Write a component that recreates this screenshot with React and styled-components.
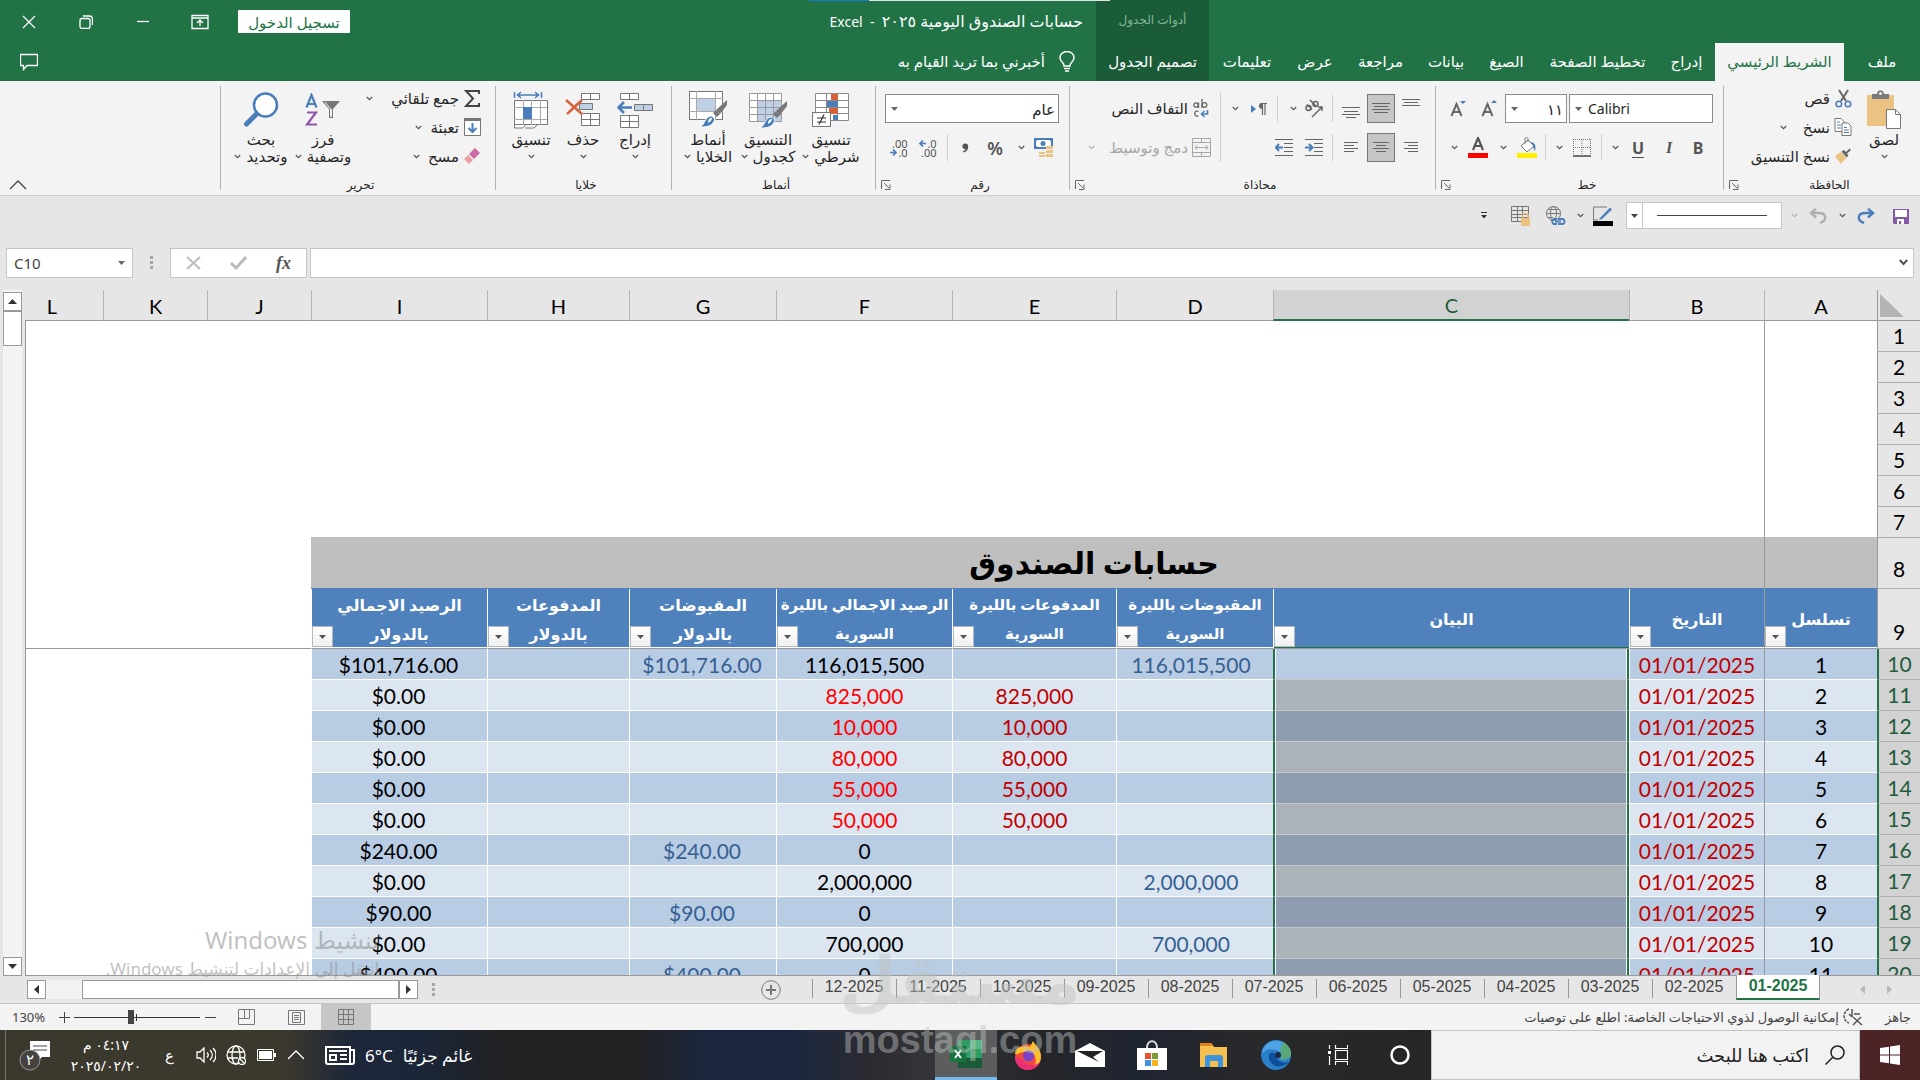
import React from "react";
import styled, { createGlobalStyle, css } from "styled-components";

const UI = `"Noto Sans", "DejaVu Sans", sans-serif`;
const CELL = `Lato, "DejaVu Sans", sans-serif`;

const Global = createGlobalStyle`
  *, *::before, *::after { box-sizing: border-box; }
  body { margin: 0; background: #e6e6e6; overflow: hidden; }
  button, input, select { font: inherit; color: inherit; margin: 0; padding: 0; border: 0; background: none; border-radius: 0; }
  button { cursor: pointer; }
  svg { display: block; flex: none; }
`;

/* ---------- shell ---------- */
const Shell = styled.div`
  position: relative;
  display: flex;
  flex-direction: column;
  height: 100vh;
  font-family: ${UI};
  font-size: 13px;
  color: #262626;
  white-space: nowrap;
`;

/* ---------- header ---------- */
const Header = styled.header`
  display: flex;
  height: 81px;
  background: #217346;
  color: #fff;
`;
const TabStrip = styled.nav`
  display: flex;
  align-items: flex-end;
`;
const Tab = styled.button`
  width: ${(p) => p.$w}px;
  height: 38px;
  padding-bottom: 2px;
  font-size: 15px;
  color: ${(p) => (p.$active ? "#217346" : "#fff")};
  background: ${(p) => (p.$active ? "#f3f3f3" : "none")};
`;
const ContextGroup = styled.div`
  display: flex;
  flex-direction: column;
  align-items: center;
  background: #1b5c38;
`;
const ContextCaption = styled.span`
  height: 43px;
  line-height: 40px;
  font-size: 12px;
  color: #86b79a;
`;
const HeaderRest = styled.div`
  flex: 1;
  display: flex;
  flex-direction: column;
`;
const HeaderLine = styled.div`
  display: flex;
  align-items: center;
  height: ${(p) => p.$h}px;
  padding-right: ${(p) => p.$pr}px;
`;
const DocTitle = styled.h1`
  margin: 0;
  font-size: 16px;
  font-weight: 400;
  line-height: 20px;
  white-space: pre;
  span { font-size: 14px; }
`;
const Spacer = styled.div`
  flex: 1;
`;
const SignIn = styled.button`
  width: 112px;
  height: 23px;
  background: #fff;
  color: #217346;
  font-size: 15px;
  line-height: 20px;
  border-radius: 1px;
  margin-left: 10px;
`;
const WindowButton = styled.button`
  width: 57px;
  height: 38px;
  display: grid;
  place-items: center;
`;
const TellMe = styled.button`
  display: flex;
  align-items: center;
  gap: 14px;
  padding-bottom: 2px;
  font-size: 15px;
  color: #fff;
`;
const EdgeStrip = styled.div`
  position: absolute;
  top: 0;
  right: 810px;
  width: 301px;
  height: 1px;
  background: linear-gradient(to right, #1979ca 60px, #e2e2e2 60px);
`;

/* ---------- ribbon ---------- */
const Ribbon = styled.section`
  display: flex;
  height: 115px;
  background: #f3f3f3;
  border-bottom: 1px solid #d0d0d0;
`;
const Group = styled.div`
  width: ${(p) => p.$w}px;
  display: flex;
  flex-direction: column;
  background: linear-gradient(#b3b3b3, #b3b3b3) left 5px / 1px 104px no-repeat;
`;
const GroupBody = styled.div`
  display: flex;
  flex: 1;
  padding-right: ${(p) => p.$pr || 10}px;
`;
const GroupFoot = styled.div`
  display: flex;
  align-items: center;
  height: 20px;
  padding-left: 6px;
`;
const GroupName = styled.span`
  flex: 1;
  text-align: center;
  font-size: 12px;
  line-height: 16px;
`;
const Launcher = styled.button`
  width: 10px;
  height: 10px;
`;
const Stack = styled.div`
  display: flex;
  flex-direction: column;
  padding-top: 13px;
  gap: 10px;
`;
const Line = styled.div`
  display: flex;
  align-items: center;
  height: 29px;
  gap: ${(p) => p.$gap || 0}px;
`;
const Tool = styled.button`
  display: grid;
  place-items: center;
  width: ${(p) => p.$w}px;
  height: 29px;
  color: #444;
  ${(p) =>
    p.$on &&
    css`
      background: #c6c6c6;
      border: 1px solid #777;
    `}
`;
const Glyph = styled.span`
  font-size: ${(p) => p.$size || 16}px;
  line-height: 20px;
  font-weight: ${(p) => (p.$bold ? 700 : 400)};
  font-style: ${(p) => (p.$italic ? "italic" : "normal")};
  font-family: ${(p) => (p.$italic ? '"Liberation Serif", serif' : UI)};
  text-decoration: ${(p) => (p.$underline ? "underline" : "none")};
  text-underline-offset: 3px;
  color: #555;
`;
const Rule = styled.span`
  width: ${(p) => p.$w}px;
  height: 27px;
  background: linear-gradient(#d0d0d0, #d0d0d0) center / 1px 100% no-repeat;
`;
const TallRule = styled.span`
  width: 1px;
  height: 69px;
  margin-top: 12px;
  background: #d0d0d0;
`;
const Combo = styled.label`
  display: flex;
  align-items: center;
  direction: ltr;
  width: ${(p) => p.$w}px;
  height: 29px;
  padding: 0 ${(p) => (p.$rtl ? 1 : 4)}px 0 5px;
  background: #fff;
  border: 1px solid #8c8c8c;
  select {
    flex: 1;
    min-width: 0;
    height: 100%;
    padding: 0 2px 0 6px;
    appearance: none;
    outline: 0;
    font-family: ${UI};
    font-size: ${(p) => (p.$rtl ? 15 : 14)}px;
    direction: ${(p) => (p.$rtl ? "rtl" : "ltr")};
  }
`;
const SmallColumn = styled.div`
  display: flex;
  flex-direction: column;
  width: ${(p) => p.$w}px;
  padding-top: 3px;
`;
const SmallButton = styled.button`
  display: flex;
  align-items: center;
  height: 29px;
  padding-bottom: 1px;
  font-size: 15px;
  color: ${(p) => (p.$off ? "#a6a6a6" : "#262626")};
`;
const SmallIcon = styled.span`
  width: 26px;
  display: grid;
  place-items: center;
`;
const ChevGap = styled.span`
  margin-right: ${(p) => p.$gap || 14}px;
`;
const LargeButton = styled.button`
  width: ${(p) => p.$w}px;
  padding-top: 8px;
  display: flex;
  flex-direction: column;
  align-items: center;
  font-size: 15px;
  line-height: 17px;
`;
const LargeIcon = styled.span`
  height: 42px;
  display: grid;
  place-items: center;
`;
const LargeLine = styled.span`
  display: flex;
  align-items: center;
  height: 17px;
  gap: 5px;
`;
const Collapse = styled.button`
  align-self: flex-end;
  margin-right: auto;
  margin-left: 9px;
  padding-bottom: 5px;
`;

/* ---------- quick access bar ---------- */
const Quick = styled.div`
  display: flex;
  align-items: center;
  height: 39px;
  padding-right: 4px;
`;
const LineStyle = styled.button`
  display: flex;
  align-items: stretch;
  direction: ltr;
  width: 156px;
  height: 27px;
  margin: 0 8px 0 6px;
  background: #fff;
  border: 1px solid #c6c6c6;
`;
const LineCaret = styled.span`
  display: grid;
  place-items: center;
  width: 16px;
  border-right: 1px solid #c6c6c6;
`;
const LineSample = styled.span`
  flex: 1;
  align-self: center;
  height: 1px;
  margin: 0 14px;
  background: #444;
`;

/* ---------- formula bar ---------- */
const FormulaBar = styled.div`
  display: flex;
  direction: ltr;
  align-items: center;
  height: 55px;
  padding: 0 6px;
`;
const Boxed = styled.div`
  display: flex;
  align-items: center;
  height: 30px;
  background: #fff;
  border: 1px solid #c6c6c6;
  ${(p) => (p.$w ? `width: ${p.$w}px;` : "flex: 1;")}
  padding: 0 ${(p) => p.$px || 0}px;
  justify-content: ${(p) => (p.$spread ? "space-between" : "flex-start")};
  input {
    flex: 1;
    min-width: 0;
    outline: 0;
    font-family: ${UI};
    font-size: 15px;
    color: #444;
  }
`;
const Dots = styled.span`
  width: ${(p) => p.$w}px;
  display: grid;
  align-content: center;
  justify-items: center;
  gap: 2px;
  i {
    width: 3px;
    height: 3px;
    background: #a6a6a6;
  }
`;
const Gap = styled.span`
  width: ${(p) => p.$w}px;
`;

/* ---------- sheet ---------- */
const SheetArea = styled.main`
  display: flex;
  flex: 1;
  min-height: 0;
`;
const SheetClip = styled.div`
  position: relative;
  flex: 1;
  min-width: 0;
  overflow: hidden;
  border-bottom: 1px solid #999;
`;
const PaneLine = styled.span`
  position: absolute;
  top: 31px;
  bottom: 0;
  ${(p) => (p.$edge ? "left: 0;" : "right: 155px;")}
  width: 1px;
  background: #999;
`;
const Table = styled.table`
  width: calc(100% + 25px);
  table-layout: fixed;
  border-collapse: separate;
  border-spacing: 0;
  font-family: ${CELL};
  font-size: 21px;
  line-height: 28px;
  color: #000;
  td,
  th {
    padding: 0;
    text-align: center;
    font-weight: 400;
  }
`;
const ColHead = styled.th`
  height: 31px;
  font-size: 20px;
  && { padding-top: 1px; }
  background: ${(p) => (p.$sel ? "#d2d2d2" : "#e6e6e6")};
  color: ${(p) => (p.$sel ? "#1f5c3d" : "#000")};
  border-left: 1px solid #b4b4b4;
  border-bottom: ${(p) => (p.$sel ? "2px solid #217346" : "1px solid #999")};
`;
const Corner = styled.th`
  background: #e6e6e6;
  border-bottom: 1px solid #999;
  border-left: 1px solid #999;
  svg { margin-right: auto; margin-left: 2px; }
`;
const RowHead = styled.th`
  height: ${(p) => p.$h || 31}px;
  vertical-align: bottom;
  && { padding-bottom: ${(p) => p.$pb || 1}px; }
  background: ${(p) => (p.$sel ? "#d2d2d2" : "#e6e6e6")};
  color: ${(p) => (p.$sel ? "#1f5c3d" : "#000")};
  border-bottom: 1px solid #b0b0b0;
  border-left: ${(p) => (p.$sel ? "2px solid #217346" : "1px solid #999")};
`;
const Blank = styled.td`
  background: #fff;
  border-bottom: ${(p) => (p.$frozen ? "1px solid #999" : "0")};
`;
const Banner = styled.td`
  background: #bfbfbf;
  && { font-weight: 700; padding-bottom: 3px; }
  font-size: 30px;
  line-height: 44px;
  box-shadow: 0 -1px #bfbfbf;
`;
const Field = styled.th`
  position: relative;
  background: #4f81bd;
  color: #fff;
  && { font-weight: 700; }
  font-size: ${(p) => (p.$tight ? 15 : 16)}px;
  line-height: 29px;
  border-left: 1px solid #fff;
  border-bottom: 1px solid #999;
  box-shadow: inset 0 -1px ${(p) => (p.$sel ? "#217346" : "#fff")}, 0 -1px #4f81bd;
`;
const Filter = styled.button`
  position: absolute;
  left: 0;
  bottom: 1px;
  width: 21px;
  height: 21px;
  display: grid;
  place-items: center;
  background: linear-gradient(#fff, #f0f0f0);
  border: 1px solid #b2b8c0;
`;
const Cell = styled.td`
  background: ${(p) => (p.$odd ? "#b8cce4" : "#dce6f1")};
  color: ${(p) => p.$ink || "#000"};
  border-left: 1px solid #fff;
  border-bottom: 1px solid #fff;
  && {
    padding-top: 2px;
    padding-right: ${(p) => p.$pad || 0}px;
  }
`;
const PickedCell = styled(Cell)`
  background: ${(p) => (p.$first ? "#b8cce4" : p.$odd ? "#8e9cb0" : "#abb2b9")};
  border-left: 2px solid #217346;
  border-right: 2px solid #217346;
  border-bottom-color: #c3c7cb;
  box-shadow: inset 1px 0 #fff, inset -1px 0 #fff;
`;
const VScroll = styled.div`
  display: flex;
  flex-direction: column;
  width: 25px;
  padding: 2px 3px 0;
  background: linear-gradient(#f3f3f3, #f3f3f3) 3px 0 / 19px 100% no-repeat;
`;
const ScrollEnd = styled.button`
  display: grid;
  place-items: center;
  width: 19px;
  height: 19px;
  background: #fff;
  border: 1px solid #999;
`;
const VThumb = styled.div`
  width: 19px;
  height: 35px;
  background: #fff;
  border: 1px solid #999;
  margin-bottom: auto;
`;

/* ---------- sheet tabs ---------- */
const SheetTabs = styled.div`
  display: flex;
  height: 28px;
  padding: 0 16px 0 27px;
  border-bottom: 1px solid #c6c6c6;
`;
const Arrows = styled.div`
  display: flex;
  align-items: center;
  justify-content: center;
  gap: 22px;
  width: 84px;
  padding-left: 28px;
`;
const SheetTab = styled.button`
  width: 84px;
  height: 23px;
  font-family: "Liberation Sans", Arial, sans-serif;
  font-size: 16px;
  line-height: 20px;
  padding-bottom: 2px;
  color: #444;
  background: linear-gradient(#999, #999) left 3px / 1px 19px no-repeat;
  ${(p) =>
    p.$active &&
    css`
      height: 25px;
      margin-top: -1px;
      position: relative;
      background: #fff;
      color: #217346;
      font-weight: 700;
      border: 1px solid #999;
      border-width: 0 1px;
      border-bottom: 2px solid #217346;
    `}
`;
const AddSheet = styled.button`
  margin-right: 31px;
  display: grid;
  place-items: center;
`;
const HScroll = styled.div`
  display: flex;
  direction: ltr;
  align-self: center;
  width: 391px;
  background: #f3f3f3;
`;
const HThumb = styled.div`
  flex: 1;
  margin-left: 36px;
  height: 19px;
  background: #fff;
  border: 1px solid #999;
`;

/* ---------- status bar ---------- */
const Status = styled.footer`
  display: flex;
  align-items: center;
  height: 26px;
  padding: 0 9px 0 12px;
  background: #f3f3f3;
  font-size: 13px;
  color: #444;
`;
const Access = styled.button`
  display: flex;
  align-items: center;
  gap: 4px;
  margin-right: 22px;
`;
const View = styled.button`
  width: 50px;
  height: 26px;
  display: grid;
  place-items: center;
  background: ${(p) => (p.$on ? "#c6c6c6" : "none")};
`;
const ZoomGroup = styled.div`
  display: flex;
  align-items: center;
  margin-right: 5px;
`;
const Zoom = styled.input`
  width: 126px;
  height: 18px;
  margin: 0 4px;
  appearance: none;
  background: linear-gradient(#333, #333) 62px center / 1px 7px no-repeat,
    linear-gradient(#333, #333) center / 100% 1px no-repeat;
  &::-webkit-slider-thumb {
    appearance: none;
    width: 6px;
    height: 14px;
    background: #444;
  }
`;
const ZoomStep = styled.button`
  width: 12px;
  display: grid;
  place-items: center;
`;
const Percent = styled.span`
  width: 38px;
  direction: ltr;
  text-align: left;
  font-size: 13px;
  margin-right: 8px;
`;

/* ---------- taskbar ---------- */
const Taskbar = styled.div`
  display: flex;
  height: 50px;
  color: #fff;
  background: linear-gradient(to right, #3b382e 0, #3b382e 285px, #1d2739 350px, #1b2638 420px, #202123 500px, #202123 640px, #1b2740 710px, #1b2740 790px, #2b2a31 870px, #353539 935px, #25262a 1040px, #1f2531 1140px, #29282b 1250px, #262628 1430px);
`;
const Start = styled.button`
  width: 60px;
  display: grid;
  place-items: center;
  background: #4d2426;
`;
const Search = styled.label`
  display: flex;
  align-items: center;
  gap: 16px;
  width: 429px;
  padding-right: 14px;
  background: #f2f2f2;
  border: 1px solid #c4c4c4;
  color: #222;
  input {
    flex: 1;
    min-width: 0;
    outline: 0;
    font-size: 18px;
    font-family: ${UI};
  }
  input::placeholder { color: #222; opacity: 1; }
`;
const Apps = styled.div`
  display: flex;
`;
const AppButton = styled.button`
  width: 62px;
  display: grid;
  place-items: center;
  ${(p) =>
    p.$on &&
    css`
      background: #5b5e5d;
      border-bottom: 3px solid #76b9ed;
    `}
`;
const Tray = styled.div`
  display: flex;
  align-items: center;
  margin-right: auto;
`;
const Weather = styled.button`
  display: flex;
  align-items: center;
  gap: 10px;
  font-size: 17px;
  color: #fff;
  margin-left: 14px;
`;
const TrayButton = styled.button`
  width: ${(p) => p.$w || 30}px;
  display: grid;
  place-items: center;
  color: #fff;
  font-size: 15px;
`;
const Clock = styled.button`
  width: 84px;
  display: flex;
  flex-direction: column;
  align-items: center;
  font-size: 14px;
  line-height: 21px;
  color: #fff;
`;
const Peek = styled.span`
  width: 6px;
  align-self: stretch;
  border-right: 1px solid #77756e;
`;

/* ---------- overlays ---------- */
const Activate = styled.div`
  position: absolute;
  left: 97px;
  bottom: 95px;
  width: 290px;
  padding-right: 8px;
  color: rgba(140, 140, 140, 0.55);
  font-size: 17px;
  line-height: 32px;
  pointer-events: none;
  strong {
    display: block;
    font-weight: 400;
    font-size: 24px;
    line-height: 26px;
  }
`;
const Brand = styled.div`
  position: absolute;
  left: 50%;
  bottom: 18px;
  transform: translateX(-50%);
  display: flex;
  flex-direction: column;
  align-items: center;
  color: rgba(190, 196, 192, 0.45);
  font: 700 38px / 44px "Liberation Sans", Arial, sans-serif;
  direction: ltr;
  pointer-events: none;
  b {
    font: 700 66px / 72px "DejaVu Sans", sans-serif;
  }
`;

/* ---------- drawings ---------- */
const Chev = ({ c = "#555" }) => (
  <svg width="7" height="5" viewBox="0 0 7 5" fill="none" stroke={c} strokeWidth="1.2"><path d="M.8 1l2.7 2.7L6.2 1" /></svg>
);
const Caret = ({ c = "#666" }) => (
  <svg width="7" height="4" viewBox="0 0 7 4"><path d="M0 0h7L3.5 4z" fill={c} /></svg>
);
const Lines = ({ y = [0, 4, 8, 12], w, align = "c" }) => {
  const ws = w || [14, 10, 14, 10];
  return (
    <svg width="18" height="21" viewBox="0 0 18 21" stroke="#666" strokeWidth="1">
      {ws.map((n, i) => {
        const x = align === "c" ? (18 - n) / 2 : align === "r" ? 18 - n - 2 : 2;
        return <path key={i} d={`M${x} ${y[i] + 0.5}h${n}`} />;
      })}
    </svg>
  );
};
const LaunchIcon = () => (
  <svg width="10" height="10" viewBox="0 0 10 10" fill="none" stroke="#666"><path d="M.5 9V.5H9M3 3l5 5M9 4.500V9.500H4" /></svg>
);
const PasteIcon = () => (
  <svg width="36" height="40" viewBox="0 0 36 40">
    <rect x="1" y="5" width="27" height="31" rx="1" fill="#eac282" />
    <path d="M6 9V4h5c0-5 7-5 7 0h5v5z" fill="#7a7a7a" /><circle cx="14.500" cy="3.500" r="1.500" fill="#f3f3f3" />
    <path d="M20.500 19.500h9l5 5v14h-14z" fill="#fff" stroke="#777" /><path d="M29.500 19.500v5h5" fill="none" stroke="#777" />
  </svg>
);
const CutIcon = () => (
  <svg width="17" height="19" viewBox="0 0 17 19" fill="none">
    <path d="M4 1l7 11M13 1L6 12" stroke="#666" strokeWidth="2" />
    <circle cx="3.800" cy="15" r="2.800" stroke="#4a7ebb" strokeWidth="1.500" /><circle cx="13" cy="15" r="2.800" stroke="#4a7ebb" strokeWidth="1.500" />
  </svg>
);
const CopyIcon = () => (
  <svg width="18" height="18" viewBox="0 0 18 18" fill="#fff" stroke="#777">
    <path d="M1 .5h6l3 3v10H1z" /><path d="M8 5h6l3 3v9.500H8z" /><path d="M3 4h3M3 7h4M3 10h4M10 9.500h3M10 12h5M10 14.500h5" stroke="#4a7ebb" />
  </svg>
);
const BrushIcon = () => (
  <svg width="18" height="16" viewBox="0 0 18 16"><path d="M1 8l6-4 5 6-5 6z" fill="#eac282" /><path d="M7.500 3.500l5 6 2-2-1.500-2L17 2 15.500.5 12 4 10 2z" fill="#666" /></svg>
);
const GrowIcon = ({ down }) => (
  <svg width="18" height="20" viewBox="0 0 18 20">
    <path d="M1.500 17L6.500 5l5 12M3.500 13h6" fill="none" stroke="#666" strokeWidth="2" />
    <path d={down ? "M10 2h6l-3 3z" : "M10 4h6l-3-3z"} fill="#4a7ebb" />
  </svg>
);
const BordersIcon = () => (
  <svg width="18" height="18" viewBox="0 0 18 18" fill="none" stroke="#777"><path strokeDasharray="1 1" d="M.5 0v16M9 0v16M17.500 0v16M0 .5h18M0 8.500h18" /><path d="M0 17h18" stroke="#444" strokeWidth="1.500" /></svg>
);
const FillIcon = () => (
  <svg width="20" height="21" viewBox="0 0 20 21"><path d="M4 9l7-6 6 6-7 6z" fill="#fff" stroke="#777" /><path d="M8 7V2c0-2 3-2 3 0v3" fill="none" stroke="#777" /><path d="M14 5c5 1 5 5 4 9-1-2-2-3-2-5z" fill="#4a7ebb" /><rect y="16" width="20" height="5" fill="#ffef00" /></svg>
);
const FontColorIcon = () => (
  <svg width="20" height="21" viewBox="0 0 20 21"><path d="M5 13L10 1l5 12M7 9h6" fill="none" stroke="#555" strokeWidth="2.200" /><rect y="16" width="20" height="5" fill="#f00" /></svg>
);
const OrientIcon = () => (
  <svg width="20" height="20" viewBox="0 0 20 20" fill="none" stroke="#666" strokeWidth="1.500"><circle cx="4.500" cy="9" r="2.500" /><path d="M3 5.500l5 5M6 1l6.500 6.500" /><circle cx="11.500" cy="5" r="2.500" /><path d="M8 18L18 8M18 12V8h-4" /></svg>
);
const ParaIcon = () => (
  <svg width="16" height="14" viewBox="0 0 16 14"><path d="M0 3l5 4-5 4z" fill="#4a7ebb" /><path d="M11.500 13V1.500M14 13V1.500M9.500 1.500H16" stroke="#666" fill="none" strokeWidth="1.200" /><path d="M11.500 1c-5 0-5 6 0 6z" fill="#666" /></svg>
);
const IndentIcon = ({ flip }) => (
  <svg width="18" height="17" viewBox="0 0 18 17" fill="none"><path d="M0 .5h18M9 4.500h9M9 8.500h9M9 12.500h9M0 16.500h18" stroke="#666" /><path d={flip ? "M0 8.500h7M4 5l3.500 3.500L4 12" : "M8 8.500H1M4 5L.8 8.500 4 12"} stroke="#4a7ebb" strokeWidth="2" /></svg>
);
const WrapIcon = () => (
  <svg width="16" height="19" viewBox="0 0 16 19" fill="none" stroke="#666" strokeWidth="1.300"><circle cx="3" cy="6" r="2.200" /><path d="M5.500 3.500V9M9 0v9" /><circle cx="11.500" cy="6" r="2.300" /><path d="M5.500 12.500c-5-2-5 6 0 4.500" /><path d="M14.500 11v4H9M11.500 12L8.500 15l3 3" stroke="#4a7ebb" strokeWidth="1.600" /></svg>
);
const MergeIcon = () => (
  <svg width="19" height="19" viewBox="0 0 19 19" fill="none" stroke="#a6a6a6"><path d="M.5.5h18v18H.5zM.5 4.500h18M.5 14.500h18M9.500.5v4M9.500 14.500v4M3 9.500h13M5.500 7L3 9.500 5.500 12M13.500 7L16 9.500 13.500 12" /></svg>
);
const MoneyIcon = () => (
  <svg width="20" height="20" viewBox="0 0 20 20"><rect x="1" y="1" width="17" height="9" fill="#fff" stroke="#4a7ebb" strokeWidth="2" /><circle cx="9" cy="5.500" r="2.500" fill="#4a7ebb" /><path d="M1 1h4L1 4zM18 1h-4l4 3zM1 10h4L1 7z" fill="#4a7ebb" /><path d="M12 8h7v3h-7zM12 12h7v3h-7zM12 16h7v3h-7zM5 14h6v2H5zM5 17h6v2H5z" fill="#eac282" /></svg>
);
const CommaIcon = () => (
  <svg width="7" height="10" viewBox="0 0 7 10" fill="#555"><circle cx="3.300" cy="3.300" r="2.800" /><path d="M6 2.500c.6 3.500-1 6-4.300 7L1 8.300c2-.8 3-2 2.800-4z" /></svg>
);
const PercentTool = styled(Glyph)`
  font-weight: 600;
`;
const Decimal = styled.span`
  display: flex;
  flex-direction: column;
  direction: ltr;
  font-size: 11px;
  line-height: 9px;
  color: #555;
  i { font-style: normal; display: flex; align-items: center; justify-content: flex-end; gap: 1px; }
`;
const SmallArrow = ({ right }) => (
  <svg width="7" height="7" viewBox="0 0 7 7" fill="none" stroke="#4a7ebb" strokeWidth="1.700"><path d={right ? "M0 3.500h6M3 .5l3 3-3 3" : "M7 3.500H1M4 .5l-3 3 3 3"} /></svg>
);
const gridPath = (x, y, w, h, c, r) => {
  let d = "";
  for (let i = 0; i <= c; i++) d += `M${x + Math.round((w * i) / c)} ${y}v${h}`;
  for (let j = 0; j <= r; j++) d += `M${x} ${y + Math.round((h * j) / r)}h${w}`;
  return d;
};
const CondIcon = () => (
  <svg width="38" height="36" viewBox="0 0 38 36"><rect x="3.500" y="1.500" width="33" height="27" fill="#fff" /><path d={gridPath(3.5, 1.5, 33, 27, 3, 4)} stroke="#8a8a8a" fill="none" /><path d="M19 2h7v6h-7zM17 16h9v6h-9z" fill="#d9623b" /><path d="M15 9h11v6H15zM21 23h5v5h-5z" fill="#4a7ebb" /><rect x=".5" y="20.500" width="18" height="14" fill="#fff" stroke="#777" /><path d="M5 26h9M5 30h9M12 22.500l-5 10" stroke="#333" strokeWidth="1.200" /></svg>
);
const Paint = () => (
  <>
    <path d="M39 9l-11 10 4 4 7-9z" fill="#777" /><path d="M25 22l3-3 4 4-3 3z" fill="#777" />
    <path d="M11 36c6-1 5-9 11-11 4 0 6 4 3 7-3 4-8 4-14 4z" fill="#4a7ebb" stroke="#fff" /><path d="M20 32c0-3 1-5 4-5 0 2-2 4-4 5z" fill="#fff" />
  </>
);
const TableIcon = () => (
  <svg width="40" height="37" viewBox="0 0 40 37"><rect x="1.500" y="1.500" width="32" height="28" fill="#fff" /><path d="M10 9h24v21H10z" fill="#bdd0e6" /><path d={gridPath(1.5, 1.5, 32, 28, 4, 4)} stroke="#999" fill="none" /><Paint /></svg>
);
const StyleIcon = () => (
  <svg width="40" height="38" viewBox="0 0 40 38"><rect x="1.500" y=".5" width="33" height="28" fill="#fff" stroke="#777" /><path d="M8.500 0v29M27.500 0v29M1 7.500h34M1 20.500h34" stroke="#aaa" /><path d="M9 8h18v12H9z" fill="#bdd0e6" /><Paint /></svg>
);
const InsertIcon = () => (
  <svg width="36" height="36" viewBox="0 0 36 36" fill="#fff" stroke="#777"><path d="M3.500 1.500h18v6h-18zM12.500 1.500v6M3.500 23.500h18v12h-18zM12.500 23.500v12M3.500 29.500h18" /><path d="M17.500 12.500h18v6h-18zM26.500 12.500v6" fill="#bdd0e6" /><path d="M15 15.500H2M7 10l-5.500 5.500L7 21" fill="none" stroke="#4a7ebb" strokeWidth="2.500" /></svg>
);
const DeleteIcon = () => (
  <svg width="36" height="34" viewBox="0 0 36 34" fill="#fff" stroke="#777"><path d="M16.500.5h18v6h-18zM25.500.5v6M16.500 20.500h18v12h-18zM25.500 20.500v12M16.500 26.500h18" /><path d="M14.500 10.500h13v6h-13z" fill="#bdd0e6" /><path d="M1 7l16 14M17 7L2 21" fill="none" stroke="#d9623b" strokeWidth="2.500" /></svg>
);
const FormatIcon = () => (
  <svg width="36" height="38" viewBox="0 0 36 38" fill="none"><path d="M1.500 1v6M28.500 1v6M4 4h22M8 1L4.500 4 8 7M22 1l3.500 3L22 7" stroke="#4a7ebb" strokeWidth="1.500" /><path d="M1.500 9.500h33v24h-33z" fill="#fff" stroke="#777" /><path d="M10.500 9v25M18.500 9v25M27.500 9v25M1 16.500h33M1 28.500h33" stroke="#aaa" /><path d="M10 16h9v12h-9z" fill="#4a7ebb" /><path d="M1.500 34v3h8l3-3M12 37h9l3-3" stroke="#777" fill="#fff" /></svg>
);
const SumIcon = () => (
  <svg width="16" height="17" viewBox="0 0 16 17" fill="none" stroke="#444" strokeWidth="2"><path d="M15 4V1H2l7 7.500L2 16h13v-3" /></svg>
);
const FillDown = () => (
  <svg width="17" height="18" viewBox="0 0 17 18" fill="none"><path d="M.5.5h16v17H.5z" fill="#fff" stroke="#777" /><path d="M0 0h17v3H0z" fill="#777" /><path d="M8.500 5v9M4.500 10l4 4 4-4" stroke="#4a7ebb" strokeWidth="2" /></svg>
);
const EraseIcon = () => (
  <svg width="16" height="16" viewBox="0 0 16 16"><path d="M5 6l6-6 5 5-6 6z" fill="#cf6aa8" /><path d="M0 11l4-4 5 5-4 4z" fill="#e9a0a0" /></svg>
);
const SortIcon = () => (
  <svg width="36" height="34" viewBox="0 0 36 34" fill="none"><path d="M1.500 14.500L6.500 2l5 12.500M3.500 11h6" stroke="#4a7ebb" strokeWidth="2.200" /><path d="M2 19.500h9L2 31.500h10" stroke="#9058a8" strokeWidth="2.200" /><path d="M17 8h18l-7 8v9h-4v-9z" fill="#777" /><path d="M20 9l5.500 7v7.500h1V16" stroke="#f3f3f3" /></svg>
);
const FindIcon = () => (
  <svg width="36" height="36" viewBox="0 0 36 36" fill="none"><circle cx="22.500" cy="13" r="11.500" fill="#fff" stroke="#4a7ebb" strokeWidth="2.500" /><path d="M13.500 22L3.500 32" stroke="#4a7ebb" strokeWidth="5" strokeLinecap="round" /></svg>
);
const Redo = ({ c = "#4a7ebb", flip }) => (
  <svg width="18" height="16" viewBox="0 0 18 16" fill="none" stroke={c} strokeWidth="2.500"><g transform={flip ? "translate(18 0) scale(-1 1)" : undefined}><path d="M7 15C-1 12 1 5 8 5h7" /><path d="M11 .8L16 5l-5 4.500" /></g></svg>
);
const SaveIcon = () => (
  <svg width="16" height="16" viewBox="0 0 16 16"><path d="M0 1h16v15H1L0 15z" fill="#8558a8" /><path d="M2 2h12v7H2zM4 11h7v5H4z" fill="#fff" /><path d="M6 13h2v3H6z" fill="#8558a8" /></svg>
);
const PenIcon = () => (
  <svg width="20" height="20" viewBox="0 0 20 20" fill="none"><path d="M14 1H.5v13H5" stroke="#777" /><path d="M7 12L17 1.500l2 2L9 13l-3 1z" fill="#4a7ebb" /><path d="M0 15h20v5H0z" fill="#000" /></svg>
);
const LinkIcon = () => (
  <svg width="20" height="20" viewBox="0 0 20 20" fill="none"><circle cx="7.500" cy="7.500" r="7" stroke="#777" /><ellipse cx="7.500" cy="7.500" rx="3" ry="7" stroke="#777" /><path d="M.5 7.500h14M2 3.500h11M2 11.500h5" stroke="#777" /><path d="M11 13H7.500a3 3 0 000 5H11M12 13h4a2.500 2.500 0 010 5h-4M9 15.500h6" stroke="#4a7ebb" strokeWidth="1.800" /></svg>
);
const LockIcon = () => (
  <svg width="20" height="20" viewBox="0 0 20 20" fill="none"><path d={gridPath(0.5, 0.5, 17, 15, 3, 4)} stroke="#777" /><path d="M10 12h9v8h-9z" fill="#eac282" /><path d="M12 12V9c0-2 5-2 5 0v3" stroke="#eac282" strokeWidth="1.500" /></svg>
);
const Tri = ({ d, c = "#333" }) => {
  const p = { up: "M0 5h9L4.500 0z", down: "M0 0h9L4.500 5z", left: "M5 0v9L0 4.500z", right: "M0 0v9l5-4.500z" }[d];
  const tall = d === "left" || d === "right";
  return <svg width={tall ? 5 : 9} height={tall ? 9 : 5}><path d={p} fill={c} /></svg>;
};
const W = ({ children, s = 16 }) => (
  <svg width={s} height={s} viewBox={`0 0 ${s} ${s}`} fill="none" stroke="#fff" strokeWidth="1.300">{children}</svg>
);

/* ---------- data ---------- */
const tabs = [["ملف", 76], ["الشريط الرئيسي", 129], ["إدراج", 57], ["تخطيط الصفحة", 121], ["الصيغ", 61], ["بيانات", 60], ["مراجعة", 71], ["عرض", 60], ["تعليمات", 76]];
const cols = [["A", 113], ["B", 135], ["C", 356], ["D", 157], ["E", 164], ["F", 176], ["G", 147], ["H", 142], ["I", 176], ["J", 104], ["K", 104], ["L", null]];
const fields = [
  ["تسلسل"],
  ["التاريخ"],
  ["البيان"],
  ["المقبوضات بالليرة", "السورية"],
  ["المدفوعات بالليرة", "السورية"],
  ["الرصيد الاجمالي بالليرة", "السورية"],
  ["المقبوضات", "بالدولار"],
  ["المدفوعات", "بالدولار"],
  ["الرصيد الاجمالي", "بالدولار"],
];
const BLUE = "#366092", DARK = "#c00000", RED = "#ff0000";
const rows = [
  ["116,015,500", "", "116,015,500", "$101,716.00", "$101,716.00"],
  ["", "825,000", "825,000", "", "$0.00"],
  ["", "10,000", "10,000", "", "$0.00"],
  ["", "80,000", "80,000", "", "$0.00"],
  ["", "55,000", "55,000", "", "$0.00"],
  ["", "50,000", "50,000", "", "$0.00"],
  ["", "", "0", "$240.00", "$240.00"],
  ["2,000,000", "", "2,000,000", "", "$0.00"],
  ["", "", "0", "$90.00", "$90.00"],
  ["700,000", "", "700,000", "", "$0.00"],
  ["", "", "0", "$400.00", "$400.00"],
];
const months = ["01", "02", "03", "04", "05", "06", "07", "08", "09", "10", "11", "12"];

const Foot = ({ name, launch }) => (
  <GroupFoot>
    <GroupName>{name}</GroupName>
    {launch && <Launcher aria-label={name}><LaunchIcon /></Launcher>}
  </GroupFoot>
);
const Small = ({ icon, label, chev, gap, off }) => (
  <SmallButton $off={off}>
    <SmallIcon>{icon}</SmallIcon>
    {label}
    {chev && <ChevGap $gap={gap}><Chev c={off ? "#b5b5b5" : undefined} /></ChevGap>}
  </SmallButton>
);
const Large = ({ w, icon, top, bottom }) => (
  <LargeButton $w={w}>
    <LargeIcon>{icon}</LargeIcon>
    <LargeLine>{top}</LargeLine>
    <LargeLine>{bottom}<Chev /></LargeLine>
  </LargeButton>
);
const ChevTool = ({ w, c }) => <Tool $w={w}><Chev c={c} /></Tool>;

function Blanks({ frozen }) {
  return <><Blank $frozen={frozen} /><Blank $frozen={frozen} /><Blank $frozen={frozen} /></>;
}

export default function App() {
  return (
    <Shell dir="rtl" lang="ar">
      <Global />
      <Header>
        <TabStrip>
          {tabs.map(([t, w], i) => <Tab key={t} $w={w} $active={i === 1}>{t}</Tab>)}
        </TabStrip>
        <ContextGroup>
          <ContextCaption>أدوات الجدول</ContextCaption>
          <Tab $w={113}>تصميم الجدول</Tab>
        </ContextGroup>
        <HeaderRest>
          <HeaderLine $h={43} $pr={13}>
            <DocTitle>حسابات الصندوق اليومية ٢٠٢٥<span>{"  -  Excel"}</span></DocTitle>
            <Spacer />
            <SignIn>تسجيل الدخول</SignIn>
            <WindowButton aria-label="خيارات عرض الشريط"><W s={18}><path d="M1 2.500h16v13H1zM1 5h16M9 13V7.500M6 10l3-3 3 3" /></W></WindowButton>
            <WindowButton aria-label="تصغير"><W s={14}><path d="M1 6.500h12" /></W></WindowButton>
            <WindowButton aria-label="استعادة"><W s={14}><rect x="1" y="3.500" width="10" height="10" rx="2" /><path d="M4 1h6.500a3 3 0 013 3v6" /></W></WindowButton>
            <WindowButton aria-label="إغلاق"><W s={14}><path d="M1 1l12 12M13 1L1 13" /></W></WindowButton>
          </HeaderLine>
          <HeaderLine $h={38} $pr={21}>
            <TellMe>
              <svg width="16" height="21" viewBox="0 0 16 21" fill="none" stroke="#fff" strokeWidth="1.500"><path d="M5 15c0-4-4-4-4-8.500a7 6 0 0114 0C15 11 11 11 11 15zM5 17.500h6M6 20h4" /></svg>
              أخبرني بما تريد القيام به
            </TellMe>
            <Spacer />
            <WindowButton aria-label="تعليقات"><W s={18}><path d="M.5 1.500h17v11H7l-3.500 4v-4h-3z" /></W></WindowButton>
          </HeaderLine>
        </HeaderRest>
      </Header>

      <Ribbon>
        <Group $w={197}>
          <GroupBody $pr={8}>
            <Large w={56} icon={<PasteIcon />} top="لصق" />
            <SmallColumn $w={124}>
              <Small icon={<CutIcon />} label="قص" />
              <Small icon={<CopyIcon />} label="نسخ" chev gap={16} />
              <Small icon={<BrushIcon />} label="نسخ التنسيق" />
            </SmallColumn>
          </GroupBody>
          <Foot name="الحافظة" launch />
        </Group>
        <Group $w={288}>
          <GroupBody>
            <Stack>
              <Line>
                <Combo $w={144}><Caret /><select aria-label="الخط"><option>Calibri</option></select></Combo>
                <Gap $w={2} />
                <Combo $w={62} $rtl><Caret /><select aria-label="حجم الخط"><option>١١</option></select></Combo>
                <Tool $w={30} aria-label="تكبير الخط"><GrowIcon /></Tool>
                <Tool $w={32} aria-label="تصغير الخط"><GrowIcon down /></Tool>
              </Line>
              <Line>
                <Tool $w={30}><Glyph $bold>B</Glyph></Tool>
                <Tool $w={28}><Glyph $bold $italic>I</Glyph></Tool>
                <Tool $w={34}><Glyph $bold $underline>U</Glyph></Tool>
                <ChevTool w={12} />
                <Rule $w={16} />
                <Tool $w={22}><BordersIcon /></Tool>
                <ChevTool w={24} />
                <Rule $w={4} />
                <Tool $w={32}><FillIcon /></Tool>
                <ChevTool w={16} />
                <Tool $w={34}><FontColorIcon /></Tool>
                <ChevTool w={14} />
              </Line>
            </Stack>
          </GroupBody>
          <Foot name="خط" launch />
        </Group>
        <Group $w={366}>
          <GroupBody>
            <Stack>
              <Line $gap={2}>
                <Tool $w={28}><Lines y={[1, 4, 7]} w={[18, 14, 18]} /></Tool>
                <Tool $w={28} $on><Lines y={[5, 8, 11, 14]} w={[18, 14, 18, 14]} /></Tool>
                <Tool $w={28}><Lines y={[9, 13, 16, 19]} w={[18, 14, 18, 10]} /></Tool>
                <Rule $w={6} />
                <Tool $w={26}><OrientIcon /></Tool>
                <ChevTool w={12} />
                <Rule $w={16} />
                <Tool $w={16}><ParaIcon /></Tool>
                <ChevTool w={28} />
              </Line>
              <Line $gap={2}>
                <Tool $w={28}><Lines y={[5, 8, 11, 14]} w={[14, 10, 14, 10]} align="r" /></Tool>
                <Tool $w={28} $on><Lines y={[5, 8, 11, 14]} w={[16, 10, 16, 10]} /></Tool>
                <Tool $w={28}><Lines y={[5, 8, 11, 14]} w={[14, 10, 14, 10]} align="l" /></Tool>
                <Rule $w={6} />
                <Tool $w={26}><IndentIcon flip /></Tool>
                <Tool $w={30}><IndentIcon /></Tool>
              </Line>
            </Stack>
            <TallRule />
            <Gap $w={6} />
            <Stack>
              <Line><Small icon={<WrapIcon />} label="التفاف النص" /></Line>
              <Line><Small icon={<MergeIcon />} label="دمج وتوسيط" chev off /></Line>
            </Stack>
          </GroupBody>
          <Foot name="محاذاة" launch />
        </Group>
        <Group $w={194}>
          <GroupBody>
            <Stack>
              <Line><Combo $w={174} $rtl><Caret /><select aria-label="تنسيق الأرقام"><option>عام</option></select></Combo></Line>
              <Line>
                <Tool $w={30}><MoneyIcon /></Tool>
                <ChevTool w={16} />
                <Tool $w={36}><PercentTool $size={18}>%</PercentTool></Tool>
                <Tool $w={24} aria-label="فاصلة"><CommaIcon /></Tool>
                <Rule $w={12} />
                <Tool $w={26}><Decimal><i><SmallArrow />.0</i><i>.00</i></Decimal></Tool>
                <Tool $w={32}><Decimal><i>.00</i><i><SmallArrow right />.0</i></Decimal></Tool>
              </Line>
            </Stack>
          </GroupBody>
          <Foot name="رقم" launch />
        </Group>
        <Group $w={204}>
          <GroupBody $pr={13}>
            <Large w={62} icon={<CondIcon />} top="تنسيق" bottom="شرطي" />
            <Large w={64} icon={<TableIcon />} top="التنسيق" bottom="كجدول" />
            <Large w={56} icon={<StyleIcon />} top="أنماط" bottom="الخلايا" />
          </GroupBody>
          <Foot name="أنماط" />
        </Group>
        <Group $w={176}>
          <GroupBody>
            <Large w={52} icon={<InsertIcon />} top="إدراج" />
            <Large w={52} icon={<DeleteIcon />} top="حذف" />
            <Large w={52} icon={<FormatIcon />} top="تنسيق" />
          </GroupBody>
          <Foot name="خلايا" />
        </Group>
        <Group $w={275}>
          <GroupBody>
            <SmallColumn $w={131}>
              <Small icon={<SumIcon />} label="جمع تلقائي" chev gap={18} />
              <Small icon={<FillDown />} label="تعبئة" chev gap={8} />
              <Small icon={<EraseIcon />} label="مسح" chev gap={8} />
            </SmallColumn>
            <Large w={62} icon={<SortIcon />} top="فرز" bottom="وتصفية" />
            <Large w={62} icon={<FindIcon />} top="بحث" bottom="وتحديد" />
          </GroupBody>
          <Foot name="تحرير" />
        </Group>
        <Collapse aria-label="طي الشريط"><svg width="18" height="10" viewBox="0 0 18 10" fill="none" stroke="#444" strokeWidth="1.300"><path d="M1 9l8-8 8 8" /></svg></Collapse>
      </Ribbon>

      <Quick>
        <Tool $w={30} aria-label="حفظ"><SaveIcon /></Tool>
        <Tool $w={40} aria-label="إعادة"><Redo /></Tool>
        <ChevTool w={8} />
        <Tool $w={40} aria-label="تراجع"><Redo c="#b0b0b0" flip /></Tool>
        <ChevTool w={8} c="#b8b8b8" />
        <LineStyle aria-label="نمط الخط"><LineCaret><Caret c="#444" /></LineCaret><LineSample /></LineStyle>
        <Tool $w={34}><PenIcon /></Tool>
        <ChevTool w={12} />
        <Tool $w={36}><LinkIcon /></Tool>
        <Tool $w={34}><LockIcon /></Tool>
        <Tool $w={40} aria-label="تخصيص"><svg width="6" height="7" viewBox="0 0 6 7"><path d="M0 0h6v1H0zM0 3h6L3 6.500z" fill="#333" /></svg></Tool>
      </Quick>

      <FormulaBar>
        <Boxed $w={127} $px={7}>
          <input aria-label="مربع الاسم" defaultValue="C10" />
          <Caret />
        </Boxed>
        <Dots $w={37}><i /><i /><i /></Dots>
        <Boxed $w={137} $px={15} $spread>
          <svg width="15" height="14" viewBox="0 0 15 14" fill="none" stroke="#bbb" strokeWidth="2"><path d="M1 1l13 12M14 1L1 13" /></svg>
          <svg width="17" height="14" viewBox="0 0 17 14" fill="none" stroke="#bbb" strokeWidth="3"><path d="M1 7l5 5L16 1" /></svg>
          <Glyph $italic $bold $size={18}>fx</Glyph>
        </Boxed>
        <Gap $w={3} />
        <Boxed $px={5}>
          <input aria-label="شريط الصيغة" defaultValue="" />
          <svg width="9" height="7" viewBox="0 0 9 7" fill="none" stroke="#555" strokeWidth="2"><path d="M.8 1l3.700 4 3.700-4" /></svg>
        </Boxed>
      </FormulaBar>

      <SheetArea>
        <SheetClip>
          <Table>
            <colgroup>
              <col width="43" />
              {cols.map(([c, w]) => (w ? <col key={c} width={w} /> : <col key={c} />))}
            </colgroup>
            <thead>
              <tr>
                <Corner><svg width="24" height="23"><path d="M0 0v23h24z" fill="#b4b4b4" /></svg></Corner>
                {cols.map(([c]) => <ColHead key={c} $sel={c === "C"}>{c}</ColHead>)}
              </tr>
            </thead>
            <tbody>
              {[1, 2, 3, 4, 5, 6, 7].map((n) => (
                <tr key={n}>
                  <RowHead>{n}</RowHead>
                  {cols.map(([c]) => <Blank key={c} />)}
                </tr>
              ))}
              <tr>
                <RowHead $h={51} $pb={5}>8</RowHead>
                <Banner colSpan={9}>حسابات الصندوق</Banner>
                <Blanks />
              </tr>
              <tr>
                <RowHead $h={60} $pb={2}>9</RowHead>
                {fields.map(([first, second], i) => (
                  <Field key={i} $sel={i === 2} $tight={i > 2 && i < 6}>
                    {first}
                    {second && <><br />{second}</>}
                    <Filter aria-label="تصفية"><Caret c="#555" /></Filter>
                  </Field>
                ))}
                <Blanks frozen />
              </tr>
              {rows.map(([d, e, f, g, i], r) => {
                const odd = r % 2 === 0;
                return (
                  <tr key={r}>
                    <RowHead $sel>{r + 10}</RowHead>
                    <Cell $odd={odd}>{r + 1}</Cell>
                    <Cell $odd={odd} $ink={DARK}>01/01/2025</Cell>
                    <PickedCell $odd={odd} $first={r === 0} />
                    <Cell $odd={odd} $ink={BLUE} $pad={8}>{d}</Cell>
                    <Cell $odd={odd} $ink={DARK}>{e}</Cell>
                    <Cell $odd={odd} $ink={e ? RED : "#000"}>{f}</Cell>
                    <Cell $odd={odd} $ink={BLUE} dir="ltr">{g}</Cell>
                    <Cell $odd={odd} />
                    <Cell $odd={odd} dir="ltr">{i}</Cell>
                    <Blanks />
                  </tr>
                );
              })}
            </tbody>
          </Table>
          <PaneLine />
          <PaneLine $edge />
        </SheetClip>
        <VScroll>
          <ScrollEnd aria-label="أعلى"><Tri d="up" /></ScrollEnd>
          <VThumb />
          <ScrollEnd aria-label="أسفل"><Tri d="down" /></ScrollEnd>
        </VScroll>
      </SheetArea>

      <SheetTabs>
        <Arrows><Tri d="right" c="#b8b8b8" /><Tri d="left" c="#b8b8b8" /></Arrows>
        {months.map((m, i) => <SheetTab key={m} $active={i === 0} dir="ltr">{m}-2025</SheetTab>)}
        <AddSheet aria-label="ورقة جديدة"><svg width="20" height="20" viewBox="0 0 20 20" fill="none" stroke="#777"><circle cx="10" cy="10" r="9.300" /><path d="M10 5v10M5 10h10" strokeWidth="2" /></svg></AddSheet>
        <Spacer />
        <Dots $w={30}><i /><i /><i /></Dots>
        <HScroll>
          <ScrollEnd aria-label="يسار"><Tri d="left" /></ScrollEnd>
          <HThumb />
          <ScrollEnd aria-label="يمين"><Tri d="right" /></ScrollEnd>
        </HScroll>
      </SheetTabs>

      <Status>
        <span>جاهز</span>
        <Access>
          <svg width="20" height="18" viewBox="0 0 20 18" fill="none" stroke="#555" strokeWidth="1.500"><path d="M6 1C-1 4 0 13 6 15" strokeDasharray="3 1" /><path d="M9 1v8M6 6l3 3M11 6h6M10 9l9 8M18 9l-8 8" /></svg>
          إمكانية الوصول لذوي الاحتياجات الخاصة: اطلع على توصيات
        </Access>
        <Spacer />
        <View $on aria-label="عادي"><svg width="17" height="17" fill="none" stroke="#777"><path d={gridPath(0.5, 0.5, 15, 15, 3, 3)} /></svg></View>
        <View aria-label="تخطيط"><svg width="17" height="15" fill="none" stroke="#777"><path d="M.5.5h16v14H.5zM4.500 2.500h8v10h-8zM6 5.500h5M6 7.500h5M6 9.500h5" /></svg></View>
        <View aria-label="فواصل"><svg width="17" height="16" fill="none" stroke="#777"><path d="M.5.5h16v15H.5zM6.500.5v9M11.500.5v9M.5 9.500h11" /></svg></View>
        <ZoomGroup>
          <ZoomStep aria-label="تصغير العرض"><svg width="11" height="11" stroke="#444"><path d="M0 5.500h11" /></svg></ZoomStep>
          <Zoom type="range" min="0" max="100" defaultValue="55" aria-label="التكبير" />
          <ZoomStep aria-label="تكبير العرض"><svg width="11" height="11" stroke="#444"><path d="M0 5.500h11M5.500 0v11" /></svg></ZoomStep>
          <Percent>130%</Percent>
        </ZoomGroup>
      </Status>

      <Taskbar>
        <Start aria-label="ابدأ"><svg width="20" height="20" viewBox="0 0 20 20" fill="#fff"><path d="M0 3l9-1.300V9.500H0zM10 1.500L20 0v9.500H10zM0 10.500h9v7.800L0 17zM10 10.500h10V20l-10-1.500z" /></svg></Start>
        <Search>
          <svg width="20" height="20" viewBox="0 0 20 20" fill="none" stroke="#222" strokeWidth="1.500"><circle cx="12.500" cy="7.500" r="6.500" /><path d="M8 12l-7.500 7.500" /></svg>
          <input placeholder="اكتب هنا للبحث" aria-label="بحث" />
        </Search>
        <Apps>
          <AppButton aria-label="Cortana"><svg width="20" height="20"><circle cx="10" cy="10" r="8.500" fill="none" stroke="#fff" strokeWidth="2.500" /></svg></AppButton>
          <AppButton aria-label="عرض المهام"><svg width="20" height="20" fill="none" stroke="#fff" strokeWidth="1.200"><path d="M1.500 0v4M1.500 11v9M7.500 0v3.500h12V0M7.500 20v-3.500h12V20M7.500 5.500h12v9h-12z" /><path d="M0 6h3v3H0z" fill="#fff" stroke="none" /></svg></AppButton>
          <AppButton aria-label="Edge"><svg width="30" height="30" viewBox="0 0 30 30"><circle cx="15" cy="15" r="15" fill="#2a7fc9" /><path d="M2 9C8-3 26-2 30 12c1 6-5 9-11 7 3-4 0-9-5-9C8 8 4 10 1 14z" fill="#4fa3e3" /><path d="M22 2c6 3 9 9 8 13-2 5-8 5-11 4 3-3 1-7 0-8z" fill="#5aa878" /><path d="M8 15c-1 8 6 13 13 11 3-1 6-3 7-4-3 1-12 1-13-6-1-4-6-5-7-1z" fill="#0d4f9c" /><circle cx="17" cy="15" r="3" fill="#1d2b44" /></svg></AppButton>
          <AppButton aria-label="مستكشف الملفات"><svg width="28" height="24" viewBox="0 0 28 24"><path d="M0 1h12l2 3h13v20H0z" fill="#f5c04f" /><path d="M0 0h12v3H0z" fill="#e08214" /><path d="M5 24v-9c0-2 1-3 3-3h12c2 0 3 1 3 3v9h-5v-6h-8v6z" fill="#3e94dc" /></svg></AppButton>
          <AppButton aria-label="Store"><svg width="30" height="30" viewBox="0 0 30 30"><path d="M10 8c0-9 10-9 10 0" fill="none" stroke="#ddd" strokeWidth="2" /><path d="M0 8h30v22H0z" fill="#fff" /><path d="M8 13h6v6H8z" fill="#e8532e" /><path d="M15 13h6v6h-6z" fill="#7a9b32" /><path d="M8 20h6v6H8z" fill="#3e94dc" /><path d="M15 20h6v6h-6z" fill="#f3b51c" /></svg></AppButton>
          <AppButton aria-label="البريد"><svg width="30" height="24" viewBox="0 0 30 24"><path d="M0 8L15 0l15 8v16H0z" fill="#fff" /><path d="M2 8h26L18 14l6 5L8 11z" fill="#222" /></svg></AppButton>
          <AppButton aria-label="Firefox"><svg width="28" height="29" viewBox="0 0 28 29"><circle cx="14" cy="16" r="13" fill="#f0493e" /><path d="M1 13C2 4 9 6 9 6c4-2 7 0 7 0l3-6c2 4 8 7 8 16 0 5-4 9-8 11 5-7 3-14-3-16C9 9 5 14 1 13z" fill="#fcbf2d" /><path d="M1 16c0 8 6 13 13 13 6 0 10-4 12-8-7 6-15 3-17-2z" fill="#ea2e77" /><circle cx="14.500" cy="15" r="5.500" fill="#7a43c8" /></svg></AppButton>
          <AppButton $on aria-label="Excel"><svg width="34" height="30" viewBox="0 0 34 30"><path d="M9 1h24v28H9z" fill="#2f9a62" /><path d="M21 1h12v9H21z" fill="#55b983" /><path d="M9 19h24v10H9z" fill="#1b5c38" /><rect x="1" y="7" width="16" height="16" rx="1" fill="#17743f" /><path d="M6 11l6 8M12 11l-6 8" stroke="#fff" strokeWidth="2" /></svg></AppButton>
        </Apps>
        <Tray>
          <Weather>
            <span>غائم جزئيًا</span>
            <span dir="ltr">6°C</span>
            <svg width="30" height="19" viewBox="0 0 30 19" fill="none" stroke="#fff" strokeWidth="2"><path d="M1 1h24v17H3c-1 0-2-1-2-2zM25 4h4v12c0 1-1 2-2 2h-2M4 5h18M15 9h7M15 13h7" /><path d="M5 9h6v5H5z" /></svg>
          </Weather>
          <TrayButton aria-label="المزيد"><W s={16}><path d="M0 12l8-8 8 8" /></W></TrayButton>
          <TrayButton aria-label="البطارية"><svg width="19" height="12" fill="none" stroke="#fff"><path d="M.5.5h16v11H.5z" /><path d="M2 2h13v8H2zM17 4h2v4h-2z" fill="#fff" stroke="none" /></svg></TrayButton>
          <TrayButton aria-label="الشبكة"><W s={20}><circle cx="10" cy="10" r="9" /><ellipse cx="10" cy="10" rx="4" ry="9" /><path d="M1 7h18M1 13h11" /><circle cx="16" cy="16" r="3.500" fill="#3b382e" /><path d="M13.500 13.500l5 5" /></W></TrayButton>
          <TrayButton aria-label="الصوت"><W s={20}><path d="M1 7h3l4-4v14l-4-4H1zM11 7.500c1.500 1.500 1.500 3.500 0 5M14 5c3 3 3 7 0 10M17 3c4 4 4 10 0 14" /></W></TrayButton>
          <TrayButton $w={43}>ع</TrayButton>
          <Clock><span>٠٤:١٧ م</span><span dir="ltr">٢٠٢٥/٠٢/٢٠</span></Clock>
          <TrayButton $w={58} aria-label="الإشعارات">
            <svg width="32" height="32" viewBox="0 0 32 32"><path d="M11 2h20v16h-8l-4 4v-4h-8z" fill="#fff" /><path d="M14 7h14M14 11h14" stroke="#444" /><circle cx="11" cy="21" r="10" fill="#444340" stroke="#999" /><text x="11" y="26" fontSize="15" fill="#fff" textAnchor="middle">٢</text></svg>
          </TrayButton>
          <Peek />
        </Tray>
      </Taskbar>

      <EdgeStrip />
      <Activate><strong>تنشيط Windows</strong>انتقل إلى الإعدادات لتنشيط Windows.</Activate>
      <Brand><b>مستقل</b>mostaql.com</Brand>
    </Shell>
  );
}
